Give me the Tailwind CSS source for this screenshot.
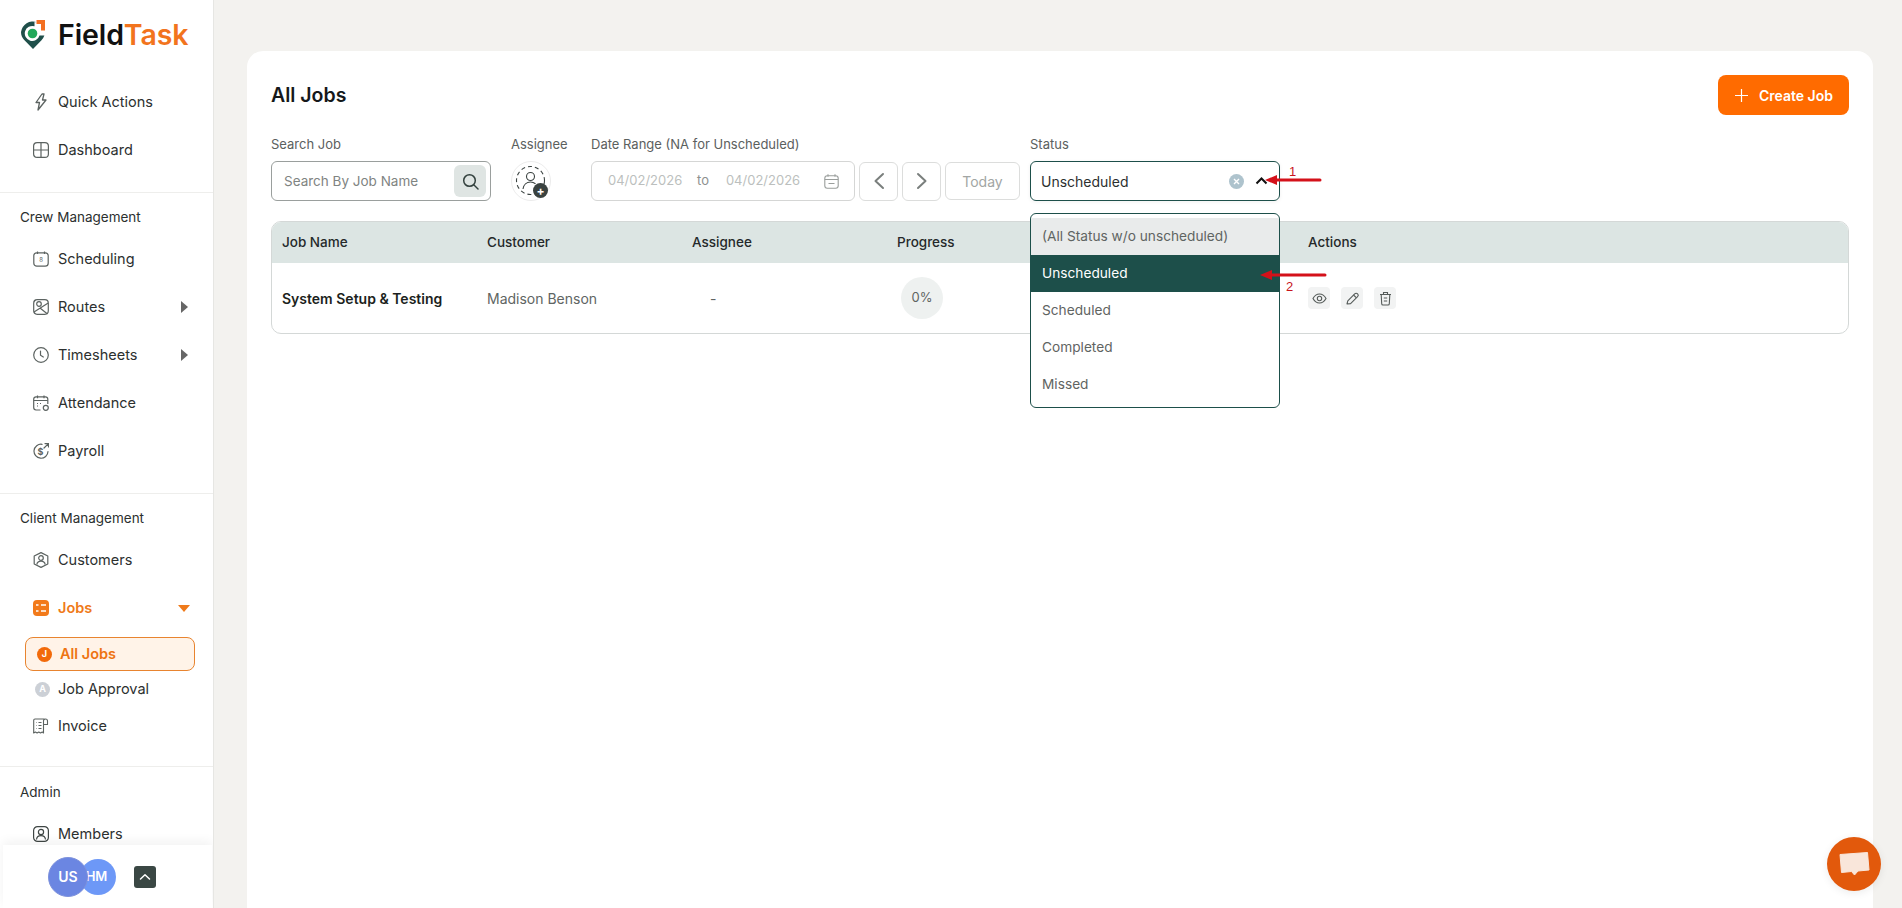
<!doctype html>
<html lang="en">
<head>
<meta charset="utf-8">
<title>FieldTask</title>
<script src="https://cdn.jsdelivr.net/npm/@tailwindcss/browser@4"></script>
</head>
<body class="m-0 h-screen overflow-hidden bg-[#f3f2ef] font-['Inter',sans-serif] text-[#2b2f2e]">
<div class="flex h-[908px] w-[1902px] overflow-hidden">

  <!-- Sidebar -->
  <aside class="relative h-full w-[214px] shrink-0 overflow-hidden border-r border-[#e6e6e3] bg-white">
    <div class="flex h-[78px] items-start pl-[20px] pt-[17px]">
      <svg class="mt-[2px]" width="26" height="31" viewBox="0 0 26 31" fill="none">
        <path d="M17 3.200A12 12 0 0 0 1 13c0 3 1 5.500 3 7.800L13 30l8.500-8.800c1.300-1.300 2.300-2.900 2.900-4.700H19.500a7.500 7.500 0 1 1-5-9.200V3z" fill="#1f4f4a"/>
        <circle cx="12.500" cy="14.500" r="4.800" fill="#22a85a"/>
        <path d="M16.500 1H25v10.500h-4V5h-4.500z" fill="#f36f21"/>
      </svg>
      <span class="ml-[12px] text-[28.500px] font-semibold leading-[36px] tracking-[-0.1px] text-[#111]">Field<span class="text-[#f2741d]">Task</span></span>
    </div>

    <nav class="text-[14.500px] font-normal text-[#2c302f]">
      <a class="flex h-[48px] items-center gap-[9px] pl-[33px]">
        <svg width="16" height="18" viewBox="0 0 16 18" fill="none" stroke="#5c6361" stroke-width="1.300" stroke-linejoin="round"><path d="M9 1 3 9.500h3.500L5 17l8-10H9.500L11 1z"/></svg>
        <span>Quick Actions</span>
      </a>
      <a class="flex h-[48px] items-center gap-[9px] pl-[33px]">
        <svg width="16" height="16" viewBox="0 0 16 16" fill="none" stroke="#5c6361" stroke-width="1.200"><rect x=".6" y=".6" width="14.800" height="14.800" rx="3.500"/><path d="M8 .6v14.800M.6 8h14.800"/></svg>
        <span>Dashboard</span>
      </a>

      <div class="mt-[18px] border-t border-[#eeeeec]"></div>
      <div class="mt-[14px] h-[20px] pl-[20px] text-[13.500px] font-normal leading-[20px]">Crew Management</div>

      <div class="mt-[8px]">
        <a class="flex h-[48px] items-center gap-[9px] pl-[33px]">
          <svg width="16" height="16" viewBox="0 0 16 16" fill="none" stroke="#5c6361" stroke-width="1.200"><rect x=".8" y="1.800" width="14.400" height="13.400" rx="3"/><path d="M4.500.5v2.500M11.500.5v2.500"/><text x="8" y="11" font-size="6" text-anchor="middle" fill="#5c6361" stroke="none" font-family="Inter">8</text></svg>
          <span>Scheduling</span>
        </a>
        <a class="flex h-[48px] items-center gap-[9px] pl-[33px] pr-[25px]">
          <svg width="16" height="16" viewBox="0 0 16 16" fill="none" stroke="#5c6361" stroke-width="1.200"><rect x=".7" y=".7" width="14.600" height="14.600" rx="3.500"/><circle cx="6" cy="5" r="2.300"/><path d="M1 13 15.200 4M7 9l7.500 6"/></svg>
          <span class="flex-1">Routes</span>
          <span class="h-0 w-0 border-y-[6px] border-l-[7px] border-y-transparent border-l-[#666]"></span>
        </a>
        <a class="flex h-[48px] items-center gap-[9px] pl-[33px] pr-[25px]">
          <svg width="16" height="16" viewBox="0 0 16 16" fill="none" stroke="#5c6361" stroke-width="1.200" stroke-linecap="round"><circle cx="8" cy="8" r="7.300"/><path d="M7.500 4v4.200l2.800 1.800"/></svg>
          <span class="flex-1">Timesheets</span>
          <span class="h-0 w-0 border-y-[6px] border-l-[7px] border-y-transparent border-l-[#666]"></span>
        </a>
        <a class="flex h-[48px] items-center gap-[9px] pl-[33px]">
          <svg width="16" height="16" viewBox="0 0 16 16" fill="none" stroke="#5c6361" stroke-width="1.200"><path d="M7.500 15H3a2.400 2.400 0 0 1-2.300-2.400V4A2.400 2.400 0 0 1 3 1.800h9.500A2.400 2.400 0 0 1 14.800 4v5"/><path d="M.8 5.500h14M4.500.4v2.800M11 .4v2.800"/><circle cx="12.800" cy="12.800" r="2.500"/><path d="M4 8.500h1M7 8.500h1M4 11h1"/></svg>
          <span>Attendance</span>
        </a>
        <a class="flex h-[48px] items-center gap-[9px] pl-[33px]">
          <svg width="16" height="16" viewBox="0 0 16 16" fill="none" stroke="#5c6361" stroke-width="1.200" stroke-linecap="round"><path d="M9 1.300A7 7 0 1 0 15 8.500"/><path d="M11 5 15.500.6M12 .6h3.500V4"/><text x="7.500" y="11.500" font-size="9" font-weight="700" text-anchor="middle" fill="#5c6361" stroke="none" font-family="Inter">$</text></svg>
          <span>Payroll</span>
        </a>
      </div>

      <div class="mt-[18px] border-t border-[#eeeeec]"></div>
      <div class="mt-[14px] h-[20px] pl-[20px] text-[13.500px] font-normal leading-[20px]">Client Management</div>

      <div class="mt-[8px]">
        <a class="flex h-[48px] items-center gap-[9px] pl-[33px]">
          <svg width="16" height="16" viewBox="0 0 16 16" fill="none" stroke="#5c6361" stroke-width="1.200"><path d="M8 .6 14.800 4v8L8 15.400 1.200 12V4z" stroke-linejoin="round"/><circle cx="8" cy="6" r="2.300"/><path d="M3.800 12.500c.5-2.300 2.200-3.300 4.200-3.300s3.700 1 4.200 3.300"/></svg>
          <span>Customers</span>
        </a>
        <a class="flex h-[48px] items-center gap-[9px] pl-[33px] pr-[23px] font-semibold text-[#ef7a1a]">
          <svg width="16" height="16" viewBox="0 0 16 16"><rect width="16" height="16" rx="4" fill="#f27a1a"/><path d="M3 5h2.500M3 11h2.500M8 5h5M8 11h5" stroke="#fff" stroke-width="1.300"/></svg>
          <span class="flex-1">Jobs</span>
          <span class="h-0 w-0 border-x-[6.500px] border-t-[7px] border-x-transparent border-t-[#ef7a1a]"></span>
        </a>
      </div>

      <a class="mx-[25px] mt-[5px] flex h-[34px] w-[170px] items-center gap-[8px] rounded-[8px] border border-[#e8842f] bg-[#fff3e8] pl-[11px] font-semibold text-[#ee7412]">
        <span class="flex h-[15px] w-[15px] items-center justify-center rounded-full bg-[#f26a0a] text-[9px] font-bold text-white">J</span>
        <span>All Jobs</span>
      </a>
      <a class="flex h-[36px] items-center gap-[8px] pl-[35px]">
        <span class="flex h-[15px] w-[15px] items-center justify-center rounded-full bg-[#ccd0d6] text-[9px] font-bold text-white">A</span>
        <span>Job Approval</span>
      </a>
      <a class="flex h-[38px] items-center gap-[9px] pl-[33px]">
        <svg width="16" height="16" viewBox="0 0 16 16" fill="none" stroke="#5c6361" stroke-width="1.100" stroke-linejoin="round"><path d="M11.500 1H2a1.300 1.300 0 0 0-1.300 1.300V15l1.700-1 1.700 1 1.700-1 1.700 1 1.700-1 1.300 1V3a2 2 0 0 1 2-2 2 2 0 0 1 2 2v3.500h-4"/><path d="M3.500 4.500h.5M5.500 4.500h3M3.500 7.500h.5M5.500 7.500h3M3.500 10.500h.5M5.500 10.500h3"/></svg>
        <span>Invoice</span>
      </a>

      <div class="mt-[21px] border-t border-[#eeeeec]"></div>
      <div class="mt-[15px] h-[20px] pl-[20px] text-[13.500px] font-normal leading-[20px]">Admin</div>
      <a class="mt-[8px] flex h-[48px] items-center gap-[9px] pl-[33px]">
        <svg width="16" height="16" viewBox="0 0 16 16" fill="none" stroke="#3f4644" stroke-width="1.200"><rect x=".6" y=".6" width="14.800" height="14.800" rx="4"/><circle cx="8" cy="6" r="2.600"/><path d="M3.500 13.500c.3-2.500 2.300-3.800 4.500-3.800s4.200 1.300 4.500 3.800"/></svg>
        <span>Members</span>
      </a>
    </nav>

    <div class="absolute bottom-0 left-[3px] flex h-[63px] w-[209px] items-center bg-white shadow-[0_-4px_10px_rgba(0,0,0,0.05)]">
      <div class="relative ml-[45px] h-[40px] w-[70px]">
        <span class="absolute left-[32px] top-[2px] flex h-[36px] w-[36px] items-center justify-center rounded-full bg-[#6d98f7] pr-[3px] text-[13px] font-semibold text-white">HM</span>
        <span class="absolute left-0 top-0 flex h-[40px] w-[40px] items-center justify-center rounded-full border border-[#7e92dc] bg-[#6b86e2] text-[14px] font-semibold text-white">US</span>
      </div>
      <span class="ml-[16px] flex h-[22px] w-[22px] items-center justify-center rounded-[3px] bg-[#3a4744]">
        <svg width="12" height="8" viewBox="0 0 12 8" fill="none" stroke="#fff" stroke-width="1.500" stroke-linecap="round" stroke-linejoin="round"><path d="M1.500 6 6 1.800 10.500 6"/></svg>
      </span>
    </div>
  </aside>

  <!-- Main -->
  <main class="flex-1 pl-[33px] pr-[29px] pt-[51px]">
    <section class="relative h-[900px] rounded-t-[16px] bg-white px-[24px] pt-[24px]">
      <div class="flex h-[40px] items-center justify-between">
        <h1 class="mt-[2px] text-[19.500px] font-semibold text-[#15181a]">All Jobs</h1>
        <button class="flex h-[40px] w-[131px] items-center justify-center gap-[10px] rounded-[8px] bg-[#ff6b00] text-[14px] font-semibold text-white">
          <svg width="15" height="15" viewBox="0 0 15 15" stroke="#fff" stroke-width="1.200"><path d="M7.500 1v13M1 7.500h13"/></svg>
          Create Job
        </button>
      </div>

      <div class="mt-[20px] flex items-start text-[13px] text-[#5b605e]">
        <div class="w-[220px]">
          <label class="block h-[26px] leading-[18px]">Search Job</label>
          <div class="flex h-[40px] items-center justify-between rounded-[6px] border border-[#9a9f9d] pl-[12px] pr-[4px]">
            <span class="text-[13.500px] text-[#7f8482]">Search By Job Name</span>
            <span class="flex h-[32px] w-[32px] items-center justify-center rounded-[6px] bg-[#dfe5e3]">
              <svg width="17" height="17" viewBox="0 0 17 17" fill="none" stroke="#33413e" stroke-width="1.500" stroke-linecap="round"><circle cx="7.500" cy="7.500" r="5.800"/><path d="m12 12 4 4"/></svg>
            </span>
          </div>
        </div>

        <div class="ml-[20px] w-[60px]">
          <label class="block h-[26px] leading-[18px]">Assignee</label>
          <span class="relative block h-[40px] w-[40px] rounded-full border border-[#ececec]">
            <svg class="absolute left-[3px] top-[3px]" width="32" height="32" viewBox="0 0 32 32" fill="none" stroke="#3a4240" stroke-width="1.100"><circle cx="15.500" cy="15.500" r="14" stroke-dasharray="4 3"/><circle cx="15.500" cy="11.500" r="4"/><path d="M8 24c.5-4.500 3.800-7 7.500-7 2 0 3.500.6 5 1.800"/></svg>
            <span class="absolute left-[21px] top-[21px] flex h-[15px] w-[15px] items-center justify-center rounded-full bg-[#3a4240] text-[12px] font-bold leading-none text-white">+</span>
          </span>
        </div>

        <div class="ml-[20px] w-[429px]">
          <label class="block h-[26px] leading-[18px]">Date Range (NA for Unscheduled)</label>
          <div class="flex items-center">
            <div class="flex h-[40px] w-[264px] items-center rounded-[6px] border border-[#d5d6d5] pl-[16px] pr-[15px] text-[13px] text-[#bcbfbe]">
              <span class="w-[72px]">04/02/2026</span>
              <span class="ml-[17px] text-[#8d918f]">to</span>
              <span class="ml-[17px] w-[72px]">04/02/2026</span>
              <svg class="ml-auto" width="15" height="15" viewBox="0 0 15 15" fill="none" stroke="#9a9e9c" stroke-width="1.100"><rect x=".8" y="1.800" width="13.400" height="12.400" rx="2.500"/><path d="M.8 5.500h13.400M4.500 9.500h6M4 .3v2.500M11 .3v2.500"/></svg>
            </div>
            <span class="ml-[4px] flex h-[39px] w-[39px] items-center justify-center rounded-[6px] border border-[#dcdddc]">
              <svg width="12" height="18" viewBox="0 0 12 18" fill="none" stroke="#7a7f7d" stroke-width="2" stroke-linecap="round" stroke-linejoin="round"><path d="M10 2 2.500 9l7.500 7"/></svg>
            </span>
            <span class="ml-[4px] flex h-[39px] w-[39px] items-center justify-center rounded-[6px] border border-[#dcdddc]">
              <svg width="12" height="18" viewBox="0 0 12 18" fill="none" stroke="#7a7f7d" stroke-width="2" stroke-linecap="round" stroke-linejoin="round"><path d="m2 2 7.500 7L2 16"/></svg>
            </span>
            <span class="ml-[4px] flex h-[38px] w-[75px] items-center justify-center rounded-[6px] border border-[#dcdddc] text-[14px] text-[#a2a6a4]">Today</span>
          </div>
        </div>

        <div class="relative ml-[10px] w-[250px]">
          <label class="block h-[26px] leading-[18px]">Status</label>
          <div class="flex h-[40px] items-center rounded-[6px] border border-[#1d4f4a] pl-[10px] pr-[11px] shadow-[0_1px_4px_rgba(0,0,0,0.06)]">
            <span class="flex-1 text-[14px] text-[#2c302f]">Unscheduled</span>
            <span class="flex h-[15px] w-[15px] items-center justify-center rounded-full bg-[#aec3cd]">
              <svg width="7" height="7" viewBox="0 0 7 7" stroke="#fff" stroke-width="1.400"><path d="m1 1 5 5M6 1 1 6"/></svg>
            </span>
            <svg class="ml-[11px]" width="13" height="8" viewBox="0 0 13 8" fill="none" stroke="#111" stroke-width="2"><path d="m1.500 6.500 5-5 5 5"/></svg>
          </div>

          <div class="absolute left-0 top-[78px] z-20 h-[195px] w-[250px] overflow-hidden rounded-[6px] border border-[#1d4f4a] bg-white pt-[4px] text-[13.700px] text-[#5f6462]">
            <div class="flex h-[37px] items-center bg-[#e9ebeb] pl-[11px]">(All Status w/o unscheduled)</div>
            <div class="flex h-[37px] items-center bg-[#1d4f4a] pl-[11px] text-white">Unscheduled</div>
            <div class="flex h-[37px] items-center pl-[11px]">Scheduled</div>
            <div class="flex h-[37px] items-center pl-[11px]">Completed</div>
            <div class="flex h-[37px] items-center pl-[11px]">Missed</div>
          </div>
        </div>
      </div>

      <!-- Table -->
      <div class="mt-[20px] h-[113px] w-[1578px] overflow-hidden rounded-[10px] border border-[#d4d8d7]">
        <div class="grid h-[41px] grid-cols-[205px_205px_205px_410px_1fr] items-center bg-[#dce5e3] pl-[10px] text-[13.500px] font-medium text-[#25292a]">
          <span>Job Name</span><span>Customer</span><span>Assignee</span><span>Progress</span><span class="pl-[1px]">Actions</span>
        </div>
        <div class="grid h-[70px] grid-cols-[205px_205px_205px_410px_1fr] items-center pl-[10px] text-[14px]">
          <span class="font-semibold text-[#1c1f20]">System Setup &amp; Testing</span>
          <span class="text-[#606563]">Madison Benson</span>
          <span class="pl-[18px] text-[#606563]">-</span>
          <span class="pl-[4px]">
            <span class="flex h-[42px] w-[42px] items-center justify-center rounded-full bg-[#eef1f0] text-[13px] text-[#5f6462]">0%</span>
          </span>
          <span class="flex gap-[11px] pl-[1px]">
            <span class="flex h-[22px] w-[22px] items-center justify-center rounded-[4px] bg-[#f2f3f3]">
              <svg width="15" height="15" viewBox="0 0 15 15" fill="none" stroke="#555b59" stroke-width="1.100"><path d="M1 7.500C2.500 4.700 4.800 3 7.500 3s5 1.700 6.500 4.500C12.500 10.300 10.200 12 7.500 12S2.500 10.300 1 7.500z"/><circle cx="7.500" cy="7.500" r="2.200"/></svg>
            </span>
            <span class="flex h-[22px] w-[22px] items-center justify-center rounded-[4px] bg-[#f2f3f3]">
              <svg width="15" height="15" viewBox="0 0 15 15" fill="none" stroke="#555b59" stroke-width="1.100" stroke-linejoin="round"><path d="M2 13l.8-3.200 6.900-7a2 2 0 0 1 2.900 2.900l-7 6.900z"/><path d="m8.500 4 2.700 2.700"/></svg>
            </span>
            <span class="flex h-[22px] w-[22px] items-center justify-center rounded-[4px] bg-[#f2f3f3]">
              <svg width="15" height="15" viewBox="0 0 15 15" fill="none" stroke="#555b59" stroke-width="1.100"><path d="M2 3.500h11M5.500 3.500V1.500h4v2M3.200 3.500l.5 9.200c0 .8.600 1.300 1.300 1.300h5c.7 0 1.300-.5 1.300-1.300l.5-9.200M5.800 7h3.400M5.800 10h3.400"/></svg>
            </span>
          </span>
        </div>
      </div>

      <!-- Annotations -->
      <svg class="pointer-events-none absolute left-[1010px] top-[110px] z-30" width="90" height="140" viewBox="0 0 90 140" fill="none">
        <path d="M63 19H16" stroke="#d4111a" stroke-width="3" stroke-linecap="round"/>
        <path d="M8 19l12-5v10z" fill="#d4111a"/>
        <path d="M68 114H12" stroke="#d4111a" stroke-width="3" stroke-linecap="round"/>
        <path d="M3 114l12-5v10z" fill="#d4111a"/>
      </svg>
      <span class="pointer-events-none absolute left-[1042px] top-[113px] z-30 font-['Liberation_Sans',sans-serif] text-[13px] leading-[16px] text-[#c8141c]">1</span>
      <span class="pointer-events-none absolute left-[1039px] top-[228px] z-30 font-['Liberation_Sans',sans-serif] text-[13px] leading-[16px] text-[#c8141c]">2</span>
    </section>
  </main>
</div>

<!-- Chat button -->
<button class="fixed left-[1827px] top-[837px] flex h-[54px] w-[54px] items-center justify-center rounded-full bg-[#e2590c] shadow-[0_2px_8px_rgba(0,0,0,0.08)]">
  <svg width="32" height="27" viewBox="0 0 32 27"><path d="M2 3.500 29.500 1.500 31 19l-11 1-3.500 4-3-3.500L3.500 21.500z" fill="#f9e6da" stroke="#f9e6da" stroke-linejoin="round"/></svg>
</button>
</body>
</html>
